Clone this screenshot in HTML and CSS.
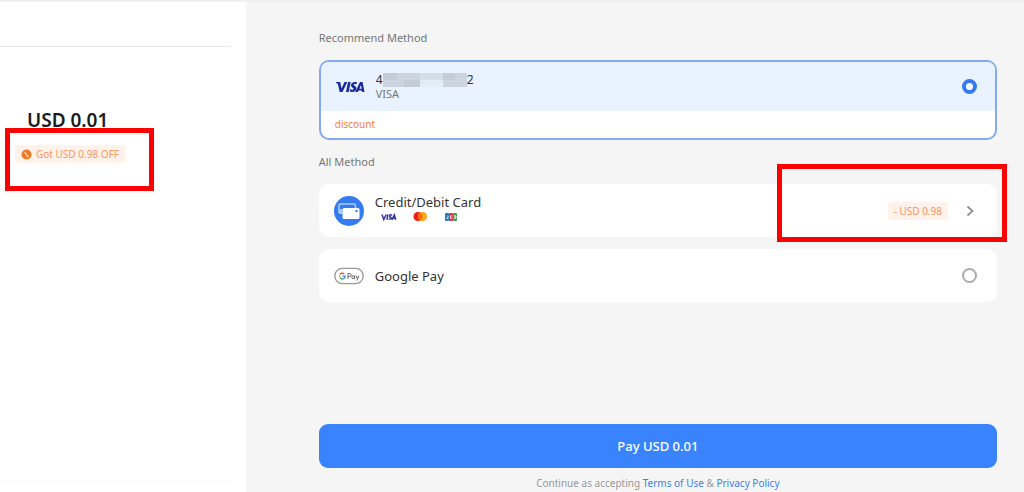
FILE: index.html
```
<!DOCTYPE html>
<html lang="en">

<head>
    <meta charset="UTF-8">
    <meta name="viewport" content="width=device-width, initial-scale=1.0">
    <title>Checkout</title>
    <link rel="stylesheet" href="styles.css">
</head>

<body>
    <div class="page">
        <aside class="summary">
            <div class="summary-header"></div>
            <div class="summary-body">
                <h1 class="amount">USD 0.01</h1>
                <div class="highlight highlight-saving">
                    <span class="badge">
                        <svg class="badge-icon" viewBox="0 0 12 12" aria-hidden="true">
                            <circle cx="6" cy="6" r="5.5" fill="#ee7a22"/>
                            <path d="M4 3.200l4 5.600" stroke="#ffe3cc" stroke-width="1.400"/>
                        </svg>
                        Got USD 0.98 OFF
                    </span>
                </div>
            </div>
            <div class="summary-footer"></div>
        </aside>

        <main class="payment">
            <h2 class="section-title">Recommend Method</h2>
            <div class="card card-selected">
                <label class="method method-saved">
                    <svg class="method-icon" viewBox="0 0 30 30" aria-hidden="true">
                        <g fill="#1a2b9b">
                            <path d="M1 10h4.200l1.300 6.500L9.500 10h2.800L7.500 20H4.700L3 12.500Q2.500 11.300 1 10.700z"/>
                            <path d="M13 10h2.700l-2 10H11z"/>
                            <path d="M22 10.300l-.6 2.200c-1.500-.6-2.700-.5-2.700.2 0 1 2.900 1.200 2.700 3.900-.2 3-3.300 4-6.700 3l.5-2.300c1.900.8 3.300.5 3.400-.3.100-1.100-2.800-1.300-2.600-3.900.3-2.700 3.100-3.600 6-2.800z"/>
                            <path fill-rule="evenodd" d="M25 10h2.600L29.500 20H27l-.3-1.500h-3.100l-.8 1.500h-2.600zM26 13l-1.500 3.700h2.100z"/>
                        </g>
                    </svg>
                    <span class="method-text">
                        <span class="card-number">4<svg class="mask" viewBox="0 0 84 14" aria-hidden="true">
                                <path d="M0 0h84v14H60V7H37v7H0z" fill="#ccd5df"/>
                                <path d="M0 0h14v7H0zM21 7h16v7H21zM60 0h12v7H60z" fill="#c3ccd7"/>
                                <path d="M37 0h23v7H37z" fill="#d5dfe9"/>
                                <path d="M37 7h23v7H37z" fill="#e3edf8"/>
                            </svg>2</span>
                        <span class="card-brand">VISA</span>
                    </span>
                    <input class="radio" type="radio" name="method" value="visa" checked>
                </label>
                <div class="discount">discount</div>
            </div>

            <h2 class="section-title">All Method</h2>
            <div class="methods">
                <button class="card method method-card" type="button">
                    <svg class="method-icon" viewBox="0 0 30 30" aria-hidden="true">
                        <circle cx="15" cy="15" r="15" fill="#347bf0"/>
                        <path d="M5 17V9.500Q5 8 6.500 8h13.500q1.500 0 1.500 1.500V12" fill="none" stroke="#a9caff" stroke-width="1.600"/>
                        <path d="M5 13h3.500v5H5z" fill="#a9caff"/>
                        <rect x="8.500" y="12" width="17" height="11" rx="1.500" fill="#fff"/>
                        <circle cx="22.500" cy="15" r="1.200" fill="#347bf0"/>
                    </svg>
                    <span class="method-text">
                        <span class="method-name">Credit/Debit Card</span>
                        <span class="brands">
                            <svg viewBox="0 0 16 10" aria-hidden="true">
                                <g fill="none" stroke="#3434a5" stroke-width="1.500">
                                    <path d="M1 2.500l1.800 5L5.200 2.500M6.800 2.500L6 7.800M11 3.200C8.500 2 7.700 4.300 9.300 5s.9 2.600-1.600 1.900M10.800 7.800l2.500-4.800 1.500 4.800M11.800 6.300h2.700"/>
                                </g>
                            </svg>
                            <svg viewBox="0 0 16 10" aria-hidden="true">
                                <circle cx="6" cy="4.500" r="4.500" fill="#ee1c12"/>
                                <circle cx="10.500" cy="4.500" r="4.500" fill="#ffa515"/>
                                <path d="M8.200.7a4.500 4.500 0 0 1 0 7.600 4.500 4.500 0 0 1 0-7.600z" fill="#ff6510"/>
                            </svg>
                            <svg viewBox="0 0 16 10" aria-hidden="true">
                                <rect x="2" y="1" width="4" height="8" rx="1" fill="#2c79b8"/>
                                <rect x="6" y="1" width="4" height="8" rx="1" fill="#dc3347"/>
                                <rect x="10" y="1" width="4" height="8" rx="1" fill="#35a04b"/>
                                <path d="M5 3.500v2.800H3.300M9.500 3.800h-2v2.500h2M11 3.800h2v2.500h-2M11 5h2" fill="none" stroke="#fff" stroke-opacity=".75"/>
                            </svg>
                        </span>
                    </span>
                    <span class="badge badge-off">- USD 0.98</span>
                    <svg class="chevron" viewBox="0 0 14 14" aria-hidden="true">
                        <path d="M4.500 2.500L9.500 7l-5 4.500" fill="none" stroke="#8e8e8e" stroke-width="1.700"/>
                    </svg>
                    <span class="highlight-box"></span>
                </button>

                <label class="card method">
                    <svg class="method-icon" viewBox="0 0 30 30" aria-hidden="true">
                        <rect x="0.800" y="7.300" width="28.400" height="15.400" rx="7.700" fill="#fff" stroke="#999" stroke-width="1.300"/>
                        <g fill="none" stroke-width="1.300">
                            <path d="M10.200 13.100A3 3 0 0 0 6 13.300" stroke="#ea4335"/>
                            <path d="M6 13.300a3 3 0 0 0 0 3.400" stroke="#fbbc04"/>
                            <path d="M6 16.700a3 3 0 0 0 4 .8" stroke="#34a853"/>
                            <path d="M10 17.500q1.200-.8 1.200-2.400H8.300" stroke="#4285f4"/>
                            <path d="M14 18v-5.500h1.600a1.500 1.500 0 0 1 0 3H14M20.600 14.600V18M20.600 16.300a1.400 1.400 0 1 1-2.800 0 1.400 1.400 0 0 1 2.800 0zM22 14.600l1.500 3.300M25 14.600l-2.200 5" stroke="#666" stroke-width="1"/>
                        </g>
                    </svg>
                    <span class="method-text">
                        <span class="method-name">Google Pay</span>
                    </span>
                    <input class="radio" type="radio" name="method" value="google-pay">
                </label>
            </div>

            <div class="actions">
                <button class="pay-button" type="button">Pay USD 0.01</button>
                <p class="terms">Continue as accepting <a href="#terms">Terms of Use</a> &amp; <a href="#privacy">Privacy Policy</a></p>
            </div>
        </main>
    </div>
</body>

</html>
```
FILE: styles.css
```
* {
    box-sizing: border-box;
}

body {
    margin: 0;
    font-family: 'Noto Sans', 'Open Sans', sans-serif;
    color: #333;
    background-color: #f5f5f5;
}

button {
    font: inherit;
    color: inherit;
    border: none;
    cursor: pointer;
}

.page {
    display: flex;
    min-height: 100vh;
    border-top: 2px solid #efefef;
}

/* left column */
.summary {
    display: flex;
    flex-direction: column;
    width: 24%;
    padding-right: 15px;
    background-color: #fff;
}

.summary-header {
    height: 45px;
    border-bottom: 1px solid #e8e8e8;
}

.summary-body {
    flex: 1;
    padding: 61px 0 0 5px;
}

.summary-footer {
    height: 12px;
    border-top: 1px solid #fafafa;
}

.amount {
    margin: 0 0 8px 22px;
    font-size: 19px;
    line-height: 24px;
    font-weight: 600;
    color: #1c1c1c;
}

.highlight {
    border: 5px solid #fd0000;
}

.highlight-saving {
    width: 149px;
    height: 63px;
    margin-top: -12px;
    padding: 12px 5px;
}

.badge {
    display: flex;
    align-items: center;
    gap: 4px;
    width: max-content;
    height: 18px;
    padding: 0 6px;
    border-radius: 3px;
    background-color: #fff2ea;
    color: #fb9560;
    font-size: 10px;
}

.badge-icon {
    width: 11px;
    height: 11px;
}

/* right column */
.payment {
    display: flex;
    flex: 1;
    flex-direction: column;
    padding: 26px 27px 0 73px;
}

.section-title {
    margin: 0 0 12px;
    font-size: 11px;
    line-height: 20px;
    font-weight: 400;
    color: #777;
}

.card {
    width: 100%;
    border-radius: 10px;
    background-color: #fff;
}

.card-selected {
    margin-bottom: 12px;
    border: 2px solid #84a9f0;
    overflow: hidden;
}

.method {
    display: flex;
    align-items: center;
    min-height: 53px;
    padding: 0 20px 0 15px;
    text-align: left;
}

.method-saved {
    min-height: 49px;
    padding: 0 18px 0 14px;
    background-color: #e8f3ff;
}

.method-icon {
    width: 30px;
    height: 30px;
    margin-right: 11px;
}

.method-text {
    display: flex;
    flex: 1;
    flex-direction: column;
}

.card-number {
    display: flex;
    align-items: center;
    font-size: 12px;
    line-height: 14px;
}

.mask {
    width: 84px;
    height: 14px;
}

.card-brand {
    font-size: 11px;
    line-height: 14px;
    color: #777;
}

.discount {
    padding: 0 14px;
    font-size: 10px;
    line-height: 27px;
    color: #fa8038;
}

.methods {
    display: flex;
    flex-direction: column;
    gap: 12px;
}

.method-card {
    position: relative;
}

.method-card .method-text {
    gap: 1px;
    padding-bottom: 6px;
}

.method-name {
    font-size: 13px;
    line-height: 18px;
}

.brands {
    display: flex;
    gap: 15px;
    padding: 0 6px;
}

.brands svg {
    width: 16px;
    height: 10px;
}

.badge-off {
    margin-right: 15px;
}

.chevron {
    width: 14px;
    height: 14px;
}

.highlight-box {
    position: absolute;
    top: -20px;
    right: -10px;
    width: 230px;
    height: 78px;
    border: 5px solid #fd0000;
}

.radio {
    appearance: none;
    width: 15px;
    height: 15px;
    margin: 0;
    border: 2px solid #aaa;
    border-radius: 50%;
    background-color: #fff;
}

.radio:checked {
    border: 4px solid #3479ee;
}

.actions {
    margin-top: auto;
}

.pay-button {
    width: 100%;
    height: 44px;
    border-radius: 9px;
    background-color: #3983fe;
    color: #fff;
    font-size: 13px;
    font-weight: 500;
}

.terms {
    margin: 6px 0 0;
    font-size: 10px;
    line-height: 18px;
    text-align: center;
    color: #999;
}

.terms a {
    color: #417fe8;
    text-decoration: none;
}
```
